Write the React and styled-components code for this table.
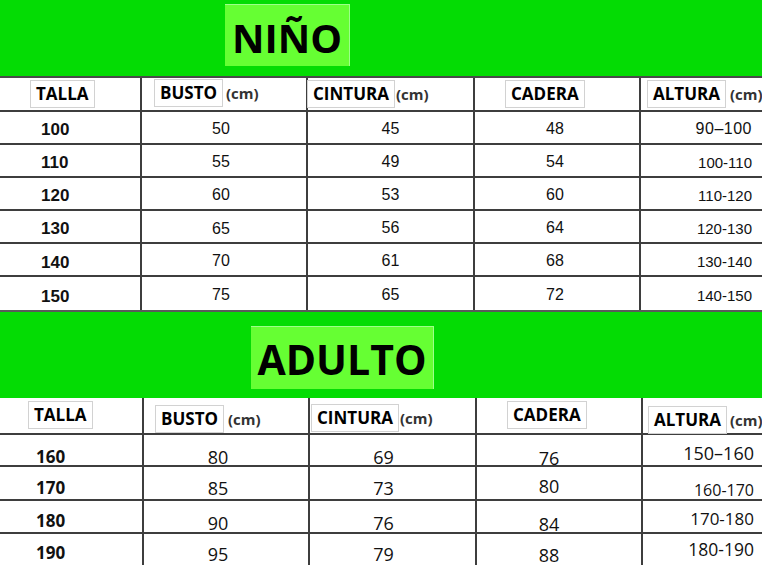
import React from 'react';
import styled, { createGlobalStyle } from 'styled-components';

const Global = createGlobalStyle`
  html, body { margin: 0; padding: 0; background: #fff; }
  body { font-family: "Open Sans", "Liberation Sans", sans-serif; }
`;

const Page = styled.div`
  width: 762px;
  height: 565px;
  overflow: hidden;
  background: #fff;
`;

const Band = styled.div`
  box-sizing: border-box;
  height: ${p => p.$h}px;
  background: #04dc04;
  display: flex;
  align-items: flex-start;
  padding: ${p => p.$top}px 0 0 ${p => p.$left}px;
  border-top: ${p => (p.$bt ? '2px solid #5a5a5a' : 'none')};
  border-bottom: ${p => (p.$bb ? '2px solid #4a4a4a' : 'none')};
`;

const TitleBox = styled.div`
  box-sizing: border-box;
  width: ${p => p.$w}px;
  height: ${p => p.$h}px;
  background: #66ff33;
  border-top: 1px solid #9dff8a;
  border-right: 1px solid #9dff8a;
  display: flex;
  align-items: center;
  justify-content: center;
  padding-top: ${p => p.$dy}px;
  font-family: "Open Sans", sans-serif;
  font-weight: 700;
  font-size: ${p => p.$size}px;
  color: #000;
`;

const Row = styled.div`
  box-sizing: border-box;
  display: flex;
  height: ${p => p.$h}px;
  border-bottom: ${p => (p.$last ? 'none' : '2px solid #3e3e3e')};
`;

const Cell = styled.div`
  box-sizing: border-box;
  ${p => (p.$w ? `width: ${p.$w}px; flex: none;` : 'flex: 1;')}
  border-right: ${p => (p.$w ? '2px solid #3e3e3e' : 'none')};
  display: flex;
  align-items: center;
  justify-content: ${p =>
    p.$align === 'left' ? 'flex-start' : p.$align === 'right' ? 'flex-end' : 'center'};
  padding-left: ${p => p.$pl || 0}px;
  padding-right: ${p => p.$pr || 0}px;
  white-space: nowrap;
`;

const HeadCell = styled.div`
  box-sizing: border-box;
  ${p => (p.$w ? `width: ${p.$w}px; flex: none;` : 'flex: 1;')}
  border-right: ${p => (p.$w ? '2px solid #3e3e3e' : 'none')};
  display: flex;
  align-items: flex-start;
  padding-top: ${p => p.$y}px;
  padding-left: ${p => Math.max(p.$x, 0)}px;
  white-space: nowrap;
`;

const Label = styled.div`
  display: flex;
  align-items: baseline;
  margin-left: ${p => Math.min(p.$x, 0)}px;
`;

const LabelBox = styled.span`
  box-sizing: border-box;
  height: 28px;
  line-height: 26px;
  padding: 0 5px;
  border: 1px solid #d2d2d2;
  background: #fff;
  font-family: "Open Sans", sans-serif;
  font-weight: 700;
  font-size: 17px;
  color: #000;
`;

const Unit = styled.span`
  margin-left: ${p => p.$gap}px;
  font-family: "Open Sans", sans-serif;
  font-weight: 700;
  font-size: 15px;
  color: #333;
`;

const Value = styled.span`
  display: block;
  margin-top: ${p => (p.$dy || 0) * 2}px;
  line-height: 1;
  font-family: ${p => p.$font};
  font-weight: ${p => (p.$bold ? 700 : 400)};
  font-size: ${p => p.$size}px;
  letter-spacing: ${p => p.$ls || 0}px;
  color: ${p => (p.$bold ? '#111' : '#111')};
`;

const kids = {
  widths: [142, 166, 167, 166, null],
  headerH: 34,
  header: [
    { label: 'TALLA', x: 30, y: 2 },
    { label: 'BUSTO', unit: true, x: 12, y: 1, gap: 3 },
    { label: 'CINTURA', unit: true, x: -1, y: 2, gap: 1 },
    { label: 'CADERA', x: 30, y: 2 },
    { label: 'ALTURA', unit: true, x: 6, y: 2, gap: 4 },
  ],
  cols: [
    { align: 'left', pl: 41, bold: true, size: 17 },
    { align: 'center', pr: 6, size: 16 },
    { align: 'center', pr: 0, size: 16 },
    { align: 'center', pr: 4, size: 16 },
    { align: 'right', pr: 10, size: 15 },
  ],
  font: '"Liberation Sans", Arial, sans-serif',
  heights: [33, 33, 33, 33, 33, 33],
  rows: [
    [['100', 2], ['50', 1], ['45', 1], ['48', 1], ['90–100', 1, 16, 0.5]],
    [['110', 1.5], ['55', 1.5], ['49', 1.5], ['54', 1.5], ['100-110', 1.5]],
    [['120', 1.5], ['60', 1.5], ['53', 1.5], ['60', 1.5], ['110-120', 1.5]],
    [['130', 1.5], ['65', 2], ['56', 1.5], ['64', 1.5], ['120-130', 1.5]],
    [['140', 2.5], ['70', 1.5], ['61', 1.5], ['68', 1.5], ['130-140', 1.5]],
    [['150', 2.5], ['75', 1.5], ['65', 1.5], ['72', 1.5], ['140-150', 1.5]],
  ],
};

const adults = {
  widths: [144, 166, 167, 166, null],
  headerH: 37,
  header: [
    { label: 'TALLA', x: 28, y: 3 },
    { label: 'BUSTO', unit: true, x: 11, y: 7, gap: 4 },
    { label: 'CINTURA', unit: true, x: 1, y: 6, gap: 1 },
    { label: 'CADERA', x: 30, y: 3 },
    { label: 'ALTURA', unit: true, x: 5, y: 8, gap: 3 },
  ],
  cols: [
    { align: 'left', pl: 36, bold: true, size: 17 },
    { align: 'center', pr: 16, size: 18 },
    { align: 'center', pr: 18, size: 18 },
    { align: 'center', pr: 20, size: 18 },
    { align: 'right', pr: 8, size: 17 },
  ],
  font: '"Open Sans", "Noto Sans", sans-serif',
  heights: [32, 34, 33, 31],
  rows: [
    [['160', 6], ['80', 7], ['69', 7], ['76', 8], ['150–160', 3, 18]],
    [['170', 4.5], ['85', 5], ['73', 5], ['80', 3], ['160-170', 6.5, 16]],
    [['180', 3.5], ['90', 6.5], ['76', 6.5], ['84', 7.5], ['170-180', 1.5, 17]],
    [['190', 3], ['95', 4], ['79', 4], ['88', 5], ['180-190', 0.5, 17.5]],
  ],
};

function SizeTable({ spec }) {
  const { widths, header, headerH, cols, rows, heights, font } = spec;
  return (
    <div>
      <Row $h={headerH}>
        {header.map((h, i) => (
          <HeadCell key={h.label} $w={widths[i]} $x={h.x} $y={h.y}>
            <Label $x={h.x}>
              <LabelBox>{h.label}</LabelBox>
              {h.unit && <Unit $gap={h.gap}>(cm)</Unit>}
            </Label>
          </HeadCell>
        ))}
      </Row>
      {rows.map((r, ri) => (
        <Row key={ri} $h={heights[ri]} $last={ri === rows.length - 1}>
          {r.map(([t, dy, size, ls], ci) => {
            const c = cols[ci];
            return (
              <Cell key={ci} $w={widths[ci]} $align={c.align} $pl={c.pl} $pr={c.pr}>
                <Value
                  $dy={dy}
                  $font={font}
                  $bold={c.bold}
                  $size={size || c.size}
                  $ls={ls}
                >
                  {t}
                </Value>
              </Cell>
            );
          })}
        </Row>
      ))}
    </div>
  );
}

export default function App() {
  return (
    <Page>
      <Global />
      <Band $h={78} $top={4} $left={225} $bb>
        <TitleBox $w={125} $h={62} $size={40} $dy={4}>NIÑO</TitleBox>
      </Band>
      <SizeTable spec={kids} />
      <Band $h={88} $top={14} $left={251} $bt>
        <TitleBox $w={183} $h={63} $size={41} $dy={2}>ADULTO</TitleBox>
      </Band>
      <SizeTable spec={adults} />
    </Page>
  );
}
